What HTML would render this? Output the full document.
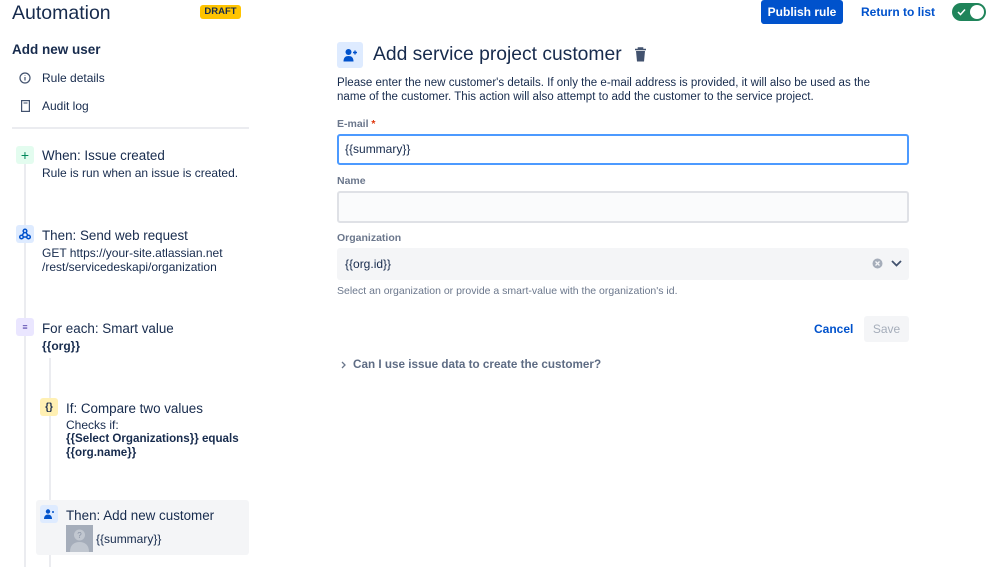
<!DOCTYPE html>
<html><head><meta charset="utf-8"><style>
*{margin:0;padding:0;box-sizing:border-box}
body{width:999px;height:567px;overflow:hidden;background:#fff;font-family:"Liberation Sans",sans-serif;color:#172b4d;position:relative}
.a{position:absolute;white-space:nowrap}
.t{font-size:13.4px}
.s{font-size:12px}
.ic{position:absolute;width:18px;height:18px;border-radius:3px;display:flex;align-items:center;justify-content:center;font-size:11px}
.lbl{font-size:10.5px;font-weight:bold;color:#6b778c}
</style></head><body>
<div class="a" style="left:12px;top:2px;font-size:19.5px">Automation</div>
<div class="a" style="left:200px;top:5px;width:41px;height:14px;background:#ffc400;border-radius:3px;font-size:9.5px;font-weight:bold;text-align:center;line-height:14px;color:#172b4d">DRAFT</div>
<div class="a" style="left:12px;top:42px;font-size:13.5px;font-weight:bold">Add new user</div>
<svg class="a" style="left:19px;top:72px" width="12" height="12" viewBox="0 0 12 12"><circle cx="6" cy="6" r="5" fill="none" stroke="#42526e" stroke-width="1.2"/><path d="M6 5v3.5M6 3.2v.6" stroke="#42526e" stroke-width="1.2"/></svg>
<div class="a s" style="left:42px;top:71px">Rule details</div>
<svg class="a" style="left:21px;top:100px" width="9" height="12" viewBox="0 0 9 12"><rect x=".6" y=".6" width="7.8" height="10.8" fill="none" stroke="#42526e" stroke-width="1.2"/><path d="M2.5 3h4" stroke="#42526e"/></svg>
<div class="a s" style="left:42px;top:99px">Audit log</div>
<div class="a" style="left:12px;top:127px;width:237px;height:2px;background:#ebecf0"></div>
<div class="a" style="left:24px;top:160px;width:2px;height:407px;background:#ebecf0"></div>
<div class="a" style="left:49px;top:358px;width:2px;height:209px;background:#ebecf0"></div>

<div class="ic" style="left:16px;top:146px;background:#e3fcef;color:#00875a;font-size:14px">+</div>
<div class="a t" style="left:42px;top:148px">When: Issue created</div>
<div class="a s" style="left:42px;top:166px">Rule is run when an issue is created.</div>

<div class="ic" style="left:16px;top:225px;background:#deebff"><svg width="12" height="12" viewBox="0 0 12 12"><g fill="none" stroke="#0052cc" stroke-width="1.5"><circle cx="6" cy="3" r="1.8"/><circle cx="2.5" cy="9" r="1.8"/><circle cx="9.5" cy="9" r="1.8"/><path d="M5 4.5L3 7.5M4.5 9h3M7 4.5l2 3"/></g></svg></div>
<div class="a t" style="left:42px;top:228px">Then: Send web request</div>
<div class="a s" style="left:42px;top:246px">GET https://your-site.atlassian.net</div>
<div class="a s" style="left:42px;top:260px">/rest/servicedeskapi/organization</div>

<div class="ic" style="left:16px;top:318px;background:#eae6ff;color:#5243aa;font-size:9px">&#8801;</div>
<div class="a t" style="left:42px;top:321px">For each: Smart value</div>
<div class="a s" style="left:42px;top:339px;font-weight:bold">{{org}}</div>

<div class="ic" style="left:40px;top:398px;background:#fff0b3;font-size:10px;font-weight:bold;color:#172b4d">{}</div>
<div class="a t" style="left:66px;top:401px">If: Compare two values</div>
<div class="a s" style="left:66px;top:418px">Checks if:</div>
<div class="a s" style="left:66px;top:432px;font-weight:bold;font-size:11.6px">{{Select Organizations}} equals</div>
<div class="a s" style="left:66px;top:446px;font-weight:bold;font-size:11.6px">{{org.name}}</div>

<div class="a" style="left:36px;top:500px;width:213px;height:55px;background:#f4f5f7;border-radius:3px"></div>
<div class="ic" style="left:40px;top:505px;background:#deebff"><svg width="12" height="12" viewBox="0 0 12 12"><circle cx="5" cy="3.5" r="2.2" fill="#0052cc"/><path d="M1 11c0-3 1.8-4.5 4-4.5S9 8 9 11z" fill="#0052cc"/><circle cx="10" cy="4" r="1" fill="#0052cc"/></svg></div>
<div class="a t" style="left:66px;top:508px">Then: Add new customer</div>
<div class="a" style="left:66px;top:525px;width:27px;height:27px;background:#a5adba"><svg width="27" height="27" viewBox="0 0 27 27"><circle cx="13.5" cy="10" r="5.5" fill="#c1c7d0"/><path d="M4 27c0-7 4-10 9.5-10S23 20 23 27z" fill="#c1c7d0"/><text x="13.5" y="13" font-size="8" text-anchor="middle" fill="#8993a4" font-family="Liberation Sans">?</text></svg></div>
<div class="a s" style="left:96px;top:532px">{{summary}}</div>

<div class="a" style="left:761px;top:0;width:82px;height:24px;background:#0052cc;border-radius:3px;color:#fff;font-size:12px;font-weight:bold;text-align:center;line-height:24px">Publish rule</div>
<div class="a" style="left:861px;top:5px;font-size:12px;color:#0052cc;font-weight:bold">Return to list</div>
<div class="a" style="left:952px;top:3px;width:34px;height:18px;background:#1f845a;border-radius:9px"><div style="position:absolute;right:2px;top:2px;width:14px;height:14px;border-radius:50%;background:#fff"></div><svg style="position:absolute;left:5px;top:5px" width="9" height="8" viewBox="0 0 9 8"><path d="M1 4l2.5 2.5L8 1.5" fill="none" stroke="#fff" stroke-width="1.5"/></svg></div>

<div class="a" style="left:337px;top:42px;width:26px;height:26px;background:#deebff;border-radius:3px"><svg style="position:absolute;left:6px;top:6px" width="15" height="14" viewBox="0 0 15 14"><circle cx="5.5" cy="4" r="3" fill="#0052cc"/><path d="M0.5 13.5c0-4 2-5.5 5-5.5s5 1.5 5 5.5z" fill="#0052cc"/><path d="M12 2.5v4M10 4.5h4" stroke="#0052cc" stroke-width="1.4"/></svg></div>
<div class="a" style="left:373px;top:44px;font-size:19.3px">Add service project customer</div>
<svg class="a" style="left:634px;top:47px" width="13" height="15" viewBox="0 0 13 15"><path d="M1 2.5h11M4.5 2.5V1h4v1.5" stroke="#42526e" stroke-width="1.6" fill="none"/><path d="M2 4h9l-1 10.5H3z" fill="#42526e"/></svg>
<div class="a s" style="left:337px;top:77px;font-size:11.55px">Please enter the new customer's details. If only the e-mail address is provided, it will also be used as the</div>
<div class="a s" style="left:337px;top:91px;font-size:11.55px">name of the customer. This action will also attempt to add the customer to the service project.</div>
<div class="a lbl" style="left:337px;top:118px">E-mail<span style="color:#de350b"> *</span></div>
<div class="a" style="left:337px;top:134px;width:572px;height:31px;border:2px solid #4c9aff;border-radius:3px"></div>
<div class="a s" style="left:345px;top:142px">{{summary}}</div>
<div class="a lbl" style="left:337px;top:175px">Name</div>
<div class="a" style="left:337px;top:191px;width:572px;height:32px;background:#fafbfc;border:2px solid #dfe1e6;border-radius:3px"></div>
<div class="a lbl" style="left:337px;top:232px">Organization</div>
<div class="a" style="left:337px;top:248px;width:572px;height:32px;background:#f4f5f7;border-radius:3px"></div>
<div class="a s" style="left:345px;top:257px">{{org.id}}</div>
<svg class="a" style="left:872px;top:258px" width="11" height="11" viewBox="0 0 11 11"><circle cx="5.5" cy="5.5" r="5" fill="#a5adba"/><path d="M3.5 3.5l4 4M7.5 3.5l-4 4" stroke="#f4f5f7" stroke-width="1.3"/></svg>
<svg class="a" style="left:891px;top:260px" width="11" height="7" viewBox="0 0 11 7"><path d="M1 1l4.5 4.5L10 1" fill="none" stroke="#42526e" stroke-width="1.8"/></svg>
<div class="a" style="left:337px;top:285px;font-size:10.5px;color:#6b778c">Select an organization or provide a smart-value with the organization's id.</div>
<div class="a" style="left:814px;top:322px;font-size:12px;color:#0052cc;font-weight:bold">Cancel</div>
<div class="a" style="left:864px;top:316px;width:45px;height:26px;background:#f4f5f7;border-radius:3px;color:#a5adba;font-size:12px;text-align:center;line-height:26px">Save</div>
<svg class="a" style="left:341px;top:361px" width="5" height="8" viewBox="0 0 5 8"><path d="M1 1l3 3-3 3" fill="none" stroke="#6b778c" stroke-width="1.3"/></svg>
<div class="a" style="left:353px;top:358px;font-size:11.7px;font-weight:bold;color:#5e6c84">Can I use issue data to create the customer?</div>
</body></html>
